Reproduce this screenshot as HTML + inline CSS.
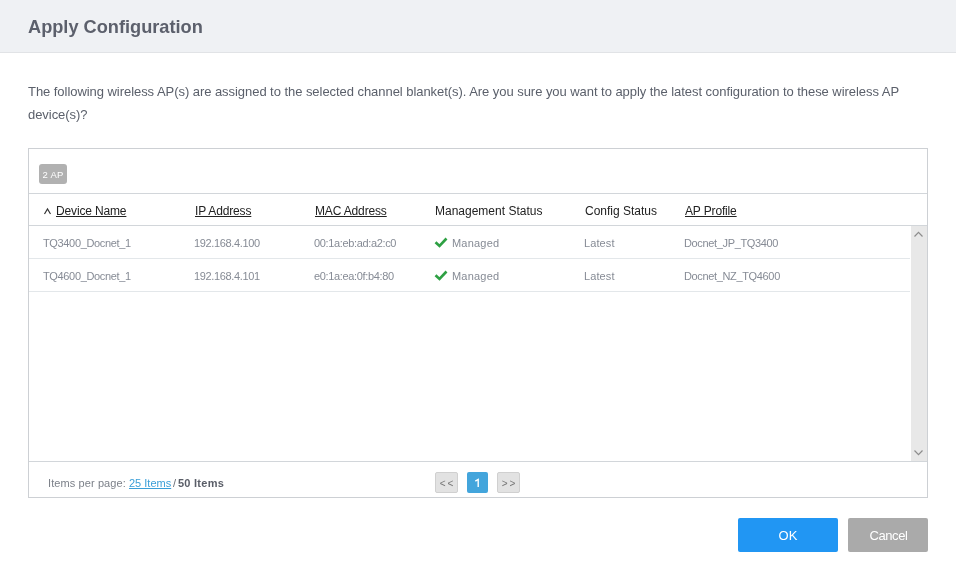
<!DOCTYPE html>
<html><head><meta charset="utf-8">
<style>
*{box-sizing:border-box;margin:0;padding:0}
body{will-change:transform}
html,body{width:956px;height:570px;overflow:hidden;background:#fff;font-family:"Liberation Sans",sans-serif;position:relative}
.abs{position:absolute;white-space:nowrap}
#hdr{position:absolute;left:0;top:0;width:956px;height:53px;background:#eff1f4;border-bottom:1px solid #e1e3e6}
#title{left:28px;top:17px;font-size:18.2px;font-weight:bold;color:#5c606c;line-height:20px}
.msg{left:28px;font-size:13px;color:#5b606b;line-height:15px;letter-spacing:-0.05px}
#box{position:absolute;left:28px;top:148px;width:900px;height:350px;border:1px solid #cdd0d4}
#badge{left:39px;top:164px;width:28px;height:20px;background:#b1b1b1;border-radius:3px;color:#fff;font-size:9.5px;line-height:21px;text-align:center;letter-spacing:0.1px;word-spacing:0.5px}
.hl{position:absolute;left:29px;width:898px;height:1px;background:#d2d6da}
.rl{position:absolute;left:29px;width:881px;height:1px;background:#e3e7ea}
.th{font-size:12px;color:#222;line-height:14px;letter-spacing:-0.15px}
.th u{text-decoration:underline}
.td{font-size:11px;color:#868b95;line-height:13px;letter-spacing:-0.35px}
.ft{font-size:11px;line-height:13px}
#sb{position:absolute;left:911px;top:226px;width:16px;height:235px;background:#e8e8e8}
.pg{position:absolute;top:472px;height:21px;border-radius:2px;font-size:11px;line-height:19px;text-align:center;color:#666}
.btn{position:absolute;top:518px;height:34px;border-radius:2px;color:#fff;font-size:13px;line-height:35px;text-align:center}
</style></head><body>
<div id="hdr"></div>
<div id="title" class="abs">Apply Configuration</div>
<div class="abs msg" style="top:84px">The following wireless AP(s) are assigned to the selected channel blanket(s). Are you sure you want to apply the latest configuration to these wireless AP</div>
<div class="abs msg" style="top:107px">device(s)?</div>

<div id="box"></div>
<div id="badge" class="abs">2 AP</div>
<div class="hl" style="top:193px"></div>
<div class="hl" style="top:225px"></div>
<div class="rl" style="top:258px"></div>
<div class="rl" style="top:291px"></div>
<div class="hl" style="top:461px"></div>

<svg class="abs" style="left:40px;top:205px" width="14" height="12"><path d="M4.5 9 L7.5 4 L10.5 9" stroke="#333" stroke-width="1.2" fill="none"/></svg>
<div class="abs th" style="left:56px;top:204px"><u>Device Name</u></div>
<div class="abs th" style="left:195px;top:204px"><u>IP Address</u></div>
<div class="abs th" style="left:315px;top:204px"><u>MAC Address</u></div>
<div class="abs th" style="left:435px;top:204px;letter-spacing:0">Management Status</div>
<div class="abs th" style="left:585px;top:204px;letter-spacing:0">Config Status</div>
<div class="abs th" style="left:685px;top:204px"><u>AP Profile</u></div>

<div class="abs td" style="left:43px;top:237px">TQ3400_Docnet_1</div>
<div class="abs td" style="left:194px;top:237px">192.168.4.100</div>
<div class="abs td" style="left:314px;top:237px">00:1a:eb:ad:a2:c0</div>
<div class="abs td" style="left:452px;top:237px;letter-spacing:0.2px">Managed</div>
<div class="abs td" style="left:584px;top:237px;letter-spacing:0.1px">Latest</div>
<div class="abs td" style="left:684px;top:237px">Docnet_JP_TQ3400</div>

<div class="abs td" style="left:43px;top:270px">TQ4600_Docnet_1</div>
<div class="abs td" style="left:194px;top:270px">192.168.4.101</div>
<div class="abs td" style="left:314px;top:270px">e0:1a:ea:0f:b4:80</div>
<div class="abs td" style="left:452px;top:270px;letter-spacing:0.2px">Managed</div>
<div class="abs td" style="left:584px;top:270px;letter-spacing:0.1px">Latest</div>
<div class="abs td" style="left:684px;top:270px">Docnet_NZ_TQ4600</div>

<svg class="abs" style="left:434px;top:236px" width="14" height="12" viewBox="0 0 14 12"><path d="M1.5 6.2 L5.5 10 L12.5 2.5" stroke="#2ea043" stroke-width="2.6" fill="none"/></svg>
<svg class="abs" style="left:434px;top:269px" width="14" height="12" viewBox="0 0 14 12"><path d="M1.5 6.2 L5.5 10 L12.5 2.5" stroke="#2ea043" stroke-width="2.6" fill="none"/></svg>

<div id="sb"></div>
<svg class="abs" style="left:913px;top:230px" width="12" height="8"><path d="M1.5 6.5 L5.5 2.3 L9.5 6.5" stroke="#8c8c8c" stroke-width="1.2" fill="none"/></svg>
<svg class="abs" style="left:913px;top:449px" width="12" height="8"><path d="M1.5 1.5 L5.5 5.7 L9.5 1.5" stroke="#8c8c8c" stroke-width="1.2" fill="none"/></svg>

<div class="abs ft" style="left:48px;top:477px;color:#7c8089;letter-spacing:0.1px">Items per page:</div>
<div class="abs ft" style="left:129px;top:477px;color:#3a9fd8;text-decoration:underline">25 Items</div>
<div class="abs ft" style="left:173px;top:477px;color:#6a6e76">/</div>
<div class="abs ft" style="left:178px;top:477px;color:#5a5e68;font-weight:bold;letter-spacing:0.25px">50 Items</div>

<div class="pg" style="left:435px;width:23px;background:#e2e2e2;border:1px solid #d0d0d0;letter-spacing:2px;font-size:10px;color:#777;line-height:21px;padding-left:2px">&lt;&lt;</div>
<div class="pg" style="left:467px;width:21px;background:#43a5dc"></div>
<svg class="abs" style="left:467px;top:472px" width="21" height="21"><path d="M8.3 9.2 L11.2 7.4 L11.2 15" stroke="#fff" stroke-width="1.4" fill="none"/></svg>
<div class="pg" style="left:497px;width:23px;background:#e2e2e2;border:1px solid #d0d0d0;letter-spacing:2px;font-size:10px;color:#777;line-height:21px;padding-left:2px">&gt;&gt;</div>

<div class="btn" style="left:738px;width:100px;background:#2196f3">OK</div>
<div class="btn" style="left:848px;width:80px;background:#aaaaaa;letter-spacing:-0.45px;padding-left:1px">Cancel</div>
</body></html>
